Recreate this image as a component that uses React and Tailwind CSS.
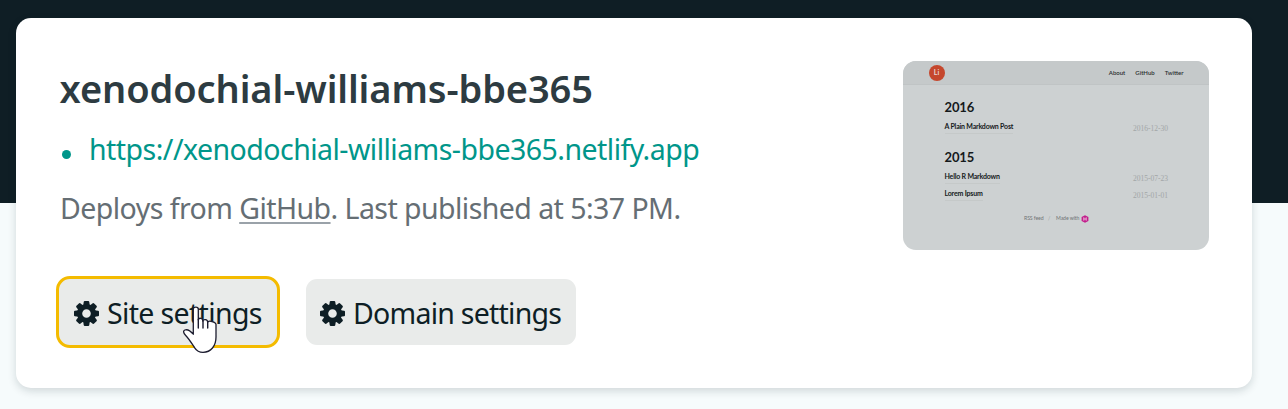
function Gear() {
  return (
    <svg viewBox="-12.5 -12.5 25 25" className="h-[25px] w-[25px] shrink-0" fill="#0e1e25">
      {[0, 45, 90, 135, 180, 225, 270, 315].map((a) => (
        <path key={a} d="M-3.500-6L-2.800-11.600Q-2.700-12.500-1.700-12.500H1.700Q2.700-12.500 2.800-11.600L3.500-6Z" transform={`rotate(${a})`} />
      ))}
      <circle r="6.900" fill="none" stroke="#0e1e25" strokeWidth="5.200" />
    </svg>
  );
}

function HandCursor() {
  return (
    <svg viewBox="0 0 34 48" className="absolute left-[124px] top-[26px] h-[48px] w-[34px]">
      <path
        d="M10.3 4.2c0-2.700 5-2.700 5 0v10.600c.4-2.300 4.500-1.900 4.500.6v.6c.5-2.200 4.800-1.700 4.800.8v.6c.7-2.300 8.400-.7 8.400 2.200V32c0 9-5 15.300-13 15.300-3.800 0-6.300-1.300-8.300-4.500C9 38.700 6.500 34.500 2.500 30.200.500 28-.2 25.800 1.900 25c3-1.100 6.300 1.700 8.400 4.200z"
        fill="#fff"
        stroke="#1b1b2e"
        strokeWidth="1.3"
        strokeLinejoin="round"
      />
      <path d="M15.300 14.500V23M20 16V23M24.700 17V23" stroke="#1b1b2e" strokeWidth="1.400" strokeLinecap="round" />
    </svg>
  );
}

function Entry({ title, date }) {
  return (
    <div className="flex h-[17.500px] items-start justify-between">
      <span className="border-b border-[#c5c9c9] pb-px text-[7px] font-bold leading-[11px] tracking-[-0.190px] text-[#15191b]">{title}</span>
      <span className="mt-[2px] font-['Liberation_Serif',serif] text-[7.500px] leading-[11px] text-[#a2a6a7]">{date}</span>
    </div>
  );
}

function Preview() {
  return (
    <div className="flex h-[189px] w-[306px] flex-col overflow-hidden rounded-[13px] bg-[#cdd1d2] font-['Lato',sans-serif]">
      <div className="flex h-[24px] shrink-0 items-center justify-between border-b border-[#c0c4c5] bg-[#c5c9ca] pl-[25.500px] pr-[25.500px]">
        <div className="flex h-[16px] w-[16px] items-center justify-center rounded-full bg-[#c5472d] text-[7px] font-bold text-[#e5d5d0]">Li</div>
        <div className="flex gap-[10px] text-[6px] font-semibold text-[#292d2f]">
          <span>About</span>
          <span>GitHub</span>
          <span>Twitter</span>
        </div>
      </div>
      <div className="flex flex-col pl-[41.500px] pr-[41px] pt-[14px]">
        <div className="h-[22px] text-[13px] font-bold leading-[17px] tracking-[-0.150px] text-[#15191b]">2016</div>
        <Entry title="A Plain Markdown Post" date="2016-12-30" />
        <div className="mt-[10px] h-[22px] text-[13px] font-bold leading-[17px] tracking-[-0.150px] text-[#15191b]">2015</div>
        <Entry title="Hello R Markdown" date="2015-07-23" />
        <Entry title="Lorem Ipsum" date="2015-01-01" />
      </div>
      <div className="mt-[8px] flex h-[10px] items-center pl-[121px] text-[5.200px] tracking-[-0.100px] text-[#717576]">
        <span className="w-[24px]">RSS feed</span>
        <span className="w-[8px] text-[#999d9e]">/</span>
        <span className="w-[25px] whitespace-nowrap">Made with</span>
        <svg viewBox="0 0 8 8" className="h-[8px] w-[8px]">
          <path d="M4 .2 7.400 2.100V5.900L4 7.800.600 5.900V2.100Z" fill="#c31f8d" />
          <path d="M2.800 2.300V5.700M5.200 2.300V5.700M2.800 4H5.200" stroke="#f0d5e6" strokeWidth=".8" />
        </svg>
      </div>
    </div>
  );
}

export default function App() {
  return (
    <div className="h-[409px] w-[1288px] overflow-hidden bg-[linear-gradient(to_bottom,#0f1e25_203px,#f6fbfc_203px)] pl-[16px] pt-[18px] font-['Noto_Sans',sans-serif]">
      <div className="flex h-[370px] w-[1236px] justify-between rounded-[15px] bg-white pl-[40px] pr-[43px] pt-[43px] shadow-[0_3px_9px_rgba(14,30,37,0.16)]">
        <div className="flex flex-col whitespace-nowrap">
          <h1 className="h-[58px] pl-[3.500px] text-[38px] font-semibold leading-[54px] tracking-[-0.100px] text-[#2d3b41]">
            xenodochial-williams-bbe365
          </h1>
          <div className="flex h-[60px] pl-[6px] text-[28.500px] leading-[60px] tracking-[-0.530px] text-[#00968a]">
            <span className="mr-[18px] mt-[31px] h-[9px] w-[9px] rounded-full bg-[#00968a]" />
            <a>https://xenodochial-williams-bbe365.netlify.app</a>
          </div>
          <p className="h-[97px] pl-[4px] text-[28.500px] leading-[58px] tracking-[-0.550px] text-[#656e74]">
            Deploys from <a className="underline decoration-[#9aa2a9] decoration-2 underline-offset-[3px] [text-decoration-skip-ink:none]">GitHub</a>. Last published at 5:37 PM.
          </p>
          <div className="flex gap-[26px] text-[28.500px] text-[#0e1e25]">
            <button className="relative flex h-[72px] w-[224px] items-center gap-[8px] rounded-[14px] border-[3px] border-[#f4bb00] bg-[#e9ebea] pl-[15px] pt-[3px] tracking-[-0.650px]">
              <Gear />
              <span>Site settings</span>
              <HandCursor />
            </button>
            <button className="mt-[3px] flex h-[66px] w-[270px] items-center gap-[8px] rounded-[11px] bg-[#e9ebea] pl-[14px] pt-[3px] tracking-[-0.750px]">
              <Gear />
              <span>Domain settings</span>
            </button>
          </div>
        </div>
        <Preview />
      </div>
    </div>
  );
}
